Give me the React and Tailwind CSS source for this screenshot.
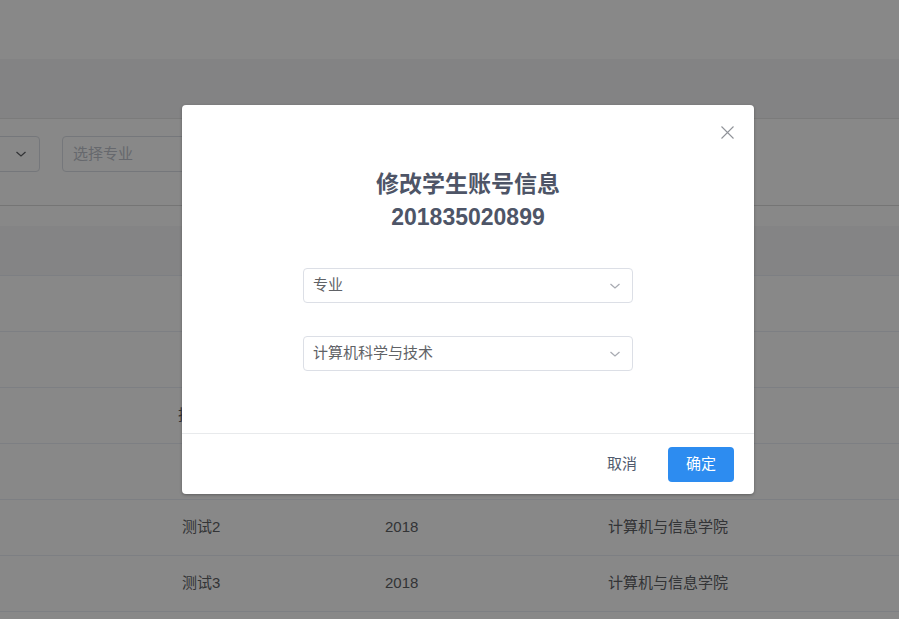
import React from "react";

const font = { fontFamily: '"Liberation Sans", "Noto Sans CJK SC", sans-serif' };

function Chevron({ className = "" }) {
  return (
    <svg width="12" height="8" viewBox="0 0 12 8" className={className} fill="none">
      <path d="M1.5 2 L6 6 L10.5 2" stroke="currentColor" strokeWidth="1.3" />
    </svg>
  );
}

function Row({ name, year, college, lead }) {
  return (
    <div className="h-[56px] shrink-0 border-b border-[#ebeef5] flex items-center text-[15px] text-[#606266]">
      <div className={lead ? "w-[178px]" : "w-[182px]"} />
      <div className="w-[203px]">{name}</div>
      <div className="w-[223px]">{year}</div>
      <div>{college}</div>
    </div>
  );
}

export default function App() {
  return (
    <div className="relative w-[899px] h-[619px] overflow-hidden bg-white" style={font}>
      {/* background page */}
      <div className="flex flex-col">
        <div className="h-[59px] bg-white shadow-[0_1px_4px_rgba(0,21,41,0.12)]" />
        <div className="h-[60px] bg-[#f5f6f8] border-b border-[#e6e6e6]" />
        <div className="h-[87px] bg-white border-b border-[#dcdcdc] flex items-start pt-[17px]">
          <div className="ml-[-160px] w-[200px] h-[36px] border border-[#dcdfe6] rounded-[4px] flex items-center justify-end pr-[12px] text-[#606266]">
            <Chevron />
          </div>
          <div className="ml-[22px] w-[220px] h-[36px] border border-[#dcdfe6] rounded-[4px] flex items-center pl-[10px] text-[15px] text-[#c0c4cc]">
            选择专业
          </div>
        </div>
        <div className="h-[20px] bg-white" />
        <div className="h-[50px] bg-[#f8f8f9] border-b border-[#ebeef5]" />
        <Row name="测试" year="2018" college="计算机与信息学院" />
        <Row name="测试" year="2018" college="计算机与信息学院" />
        <Row name="技术员" year="2018" college="计算机与信息学院" lead />
        <Row name="测试1" year="2018" college="计算机与信息学院" />
        <Row name="测试2" year="2018" college="计算机与信息学院" />
        <Row name="测试3" year="2018" college="计算机与信息学院" />
        <div className="h-[6px] bg-white" />
      </div>

      {/* overlay */}
      <div className="absolute inset-0 bg-[rgba(0,0,0,0.465)]" />

      {/* dialog */}
      <div className="absolute left-[182px] top-[105px] w-[572px] h-[389px] bg-white rounded-[4px] shadow-[0_1px_3px_rgba(0,0,0,0.3)] flex flex-col">
        <div className="relative h-[328px] flex flex-col items-center">
          <button className="absolute right-[20px] top-[21px] text-[#909399]">
            <svg width="13" height="13" viewBox="0 0 13 13" fill="none">
              <path d="M0.5 0.5 L12.5 12.5 M12.5 0.5 L0.5 12.5" stroke="currentColor" strokeWidth="1.1" />
            </svg>
          </button>
          <div className="mt-[63px] text-[23px] leading-[33px] font-bold text-[#4e5567] text-center">
            <div>修改学生账号信息</div>
            <div>201835020899</div>
          </div>
          <div className="mt-[34px] w-[330px] h-[35px] border border-[#dcdfe6] rounded-[4px] flex items-center justify-between pl-[9px] pr-[11px] text-[15px] text-[#606266]">
            <span>专业</span>
            <Chevron className="text-[#a8abb2]" />
          </div>
          <div className="mt-[33px] w-[330px] h-[35px] border border-[#dcdfe6] rounded-[4px] flex items-center justify-between pl-[9px] pr-[11px] text-[15px] text-[#606266]">
            <span>计算机科学与技术</span>
            <Chevron className="text-[#a8abb2]" />
          </div>
        </div>
        <div className="border-t border-[#e8eaec] flex-1 flex items-start justify-end pt-[13px] pr-[20px] gap-[14px]">
          <button className="h-[35px] px-[17px] text-[15px] text-[#515a6e]">取消</button>
          <button className="h-[35px] w-[66px] rounded-[4px] bg-[#2d8cf0] text-white text-[15px]">确定</button>
        </div>
      </div>
    </div>
  );
}
